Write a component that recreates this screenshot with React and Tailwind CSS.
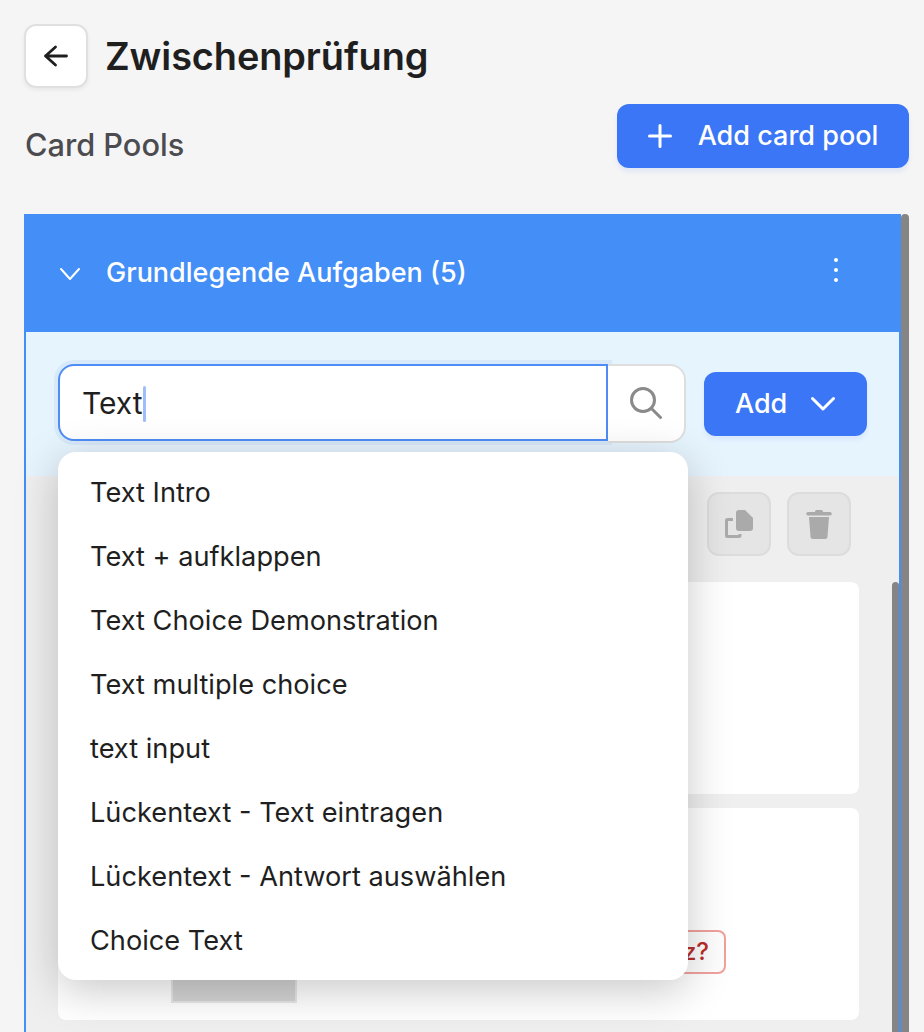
import React from "react";

const items = [
  "Text Intro",
  "Text + aufklappen",
  "Text Choice Demonstration",
  "Text multiple choice",
  "text input",
  "Lückentext - Text eintragen",
  "Lückentext - Antwort auswählen",
  "Choice Text",
];

function Arrow() {
  return (
    <svg width="28" height="28" viewBox="0 0 28 28" fill="none" stroke="#1f1f1f" strokeWidth="2.800" strokeLinecap="round" strokeLinejoin="round">
      <path d="M24.500 14H3.500M13.500 5l-10 9 10 9" />
    </svg>
  );
}

function SearchIcon() {
  return (
    <svg width="32" height="32" viewBox="0 0 32 32" fill="none" stroke="#8a8a8a" strokeWidth="3" strokeLinecap="round" className="-mt-0.5">
      <circle cx="13" cy="13" r="11.500" />
      <path d="M21.500 21.500l9 9" />
    </svg>
  );
}

function CopyIcon() {
  return (
    <svg width="30" height="30" viewBox="0 0 30 30" fill="#aaaaaa">
      <path d="M15 1h6l8 8v10a3 3 0 0 1-3 3H15a3 3 0 0 1-3-3V4a3 3 0 0 1 3-3z" />
      <path d="M9 9H3.500A2.500 2.500 0 0 0 1 11.500V26.500A2.500 2.500 0 0 0 3.500 29H15a2.500 2.500 0 0 0 2.500-2.500V25h-3v1H4V12h5z" />
    </svg>
  );
}

function TrashIcon() {
  return (
    <svg width="26" height="30" viewBox="0 0 26 30" fill="#aaaaaa">
      <path d="M9 2.500C9 1.500 10 1 11 1h4c1 0 2 .5 2 1.500V3h7a1.500 1.500 0 0 1 0 3.500H2A1.500 1.500 0 0 1 2 3h7z" />
      <path d="M3 8h20l-1.500 19.500A2.500 2.500 0 0 1 19 30H7a2.500 2.500 0 0 1-2.500-2.500z" />
    </svg>
  );
}

export default function App() {
  return (
    <div className="h-[1032px] overflow-hidden bg-[#f5f5f5] pl-6 pr-[15px] font-['Inter',sans-serif] text-[#1f1f1f]">
      <div className="flex items-center gap-[18px] pt-6">
        <button className="flex h-[64px] w-[64px] items-center justify-center rounded-xl border-2 border-[#e0e0e0] bg-white shadow-[0_2px_4px_rgba(0,0,0,0.06)]">
          <Arrow />
        </button>
        <h1 className="-ml-px text-[37.900px] leading-[44px] font-semibold tracking-[-0.1px] text-[#1f1f1f]">Zwischenprüfung</h1>
      </div>

      <div className="mt-4 flex items-start justify-between pl-px">
        <h2 className="mt-[21px] text-[30.700px] leading-[40px] font-medium text-[#4b4b50]">Card Pools</h2>
        <button className="flex h-16 w-[292px] items-center justify-center gap-[26px] rounded-xl bg-[#3b76f6] text-[27px] font-medium text-white shadow-[0_4px_4px_rgba(59,118,246,0.1)]">
          <svg width="24" height="24" viewBox="0 0 24 24" fill="none" stroke="white" strokeWidth="3" strokeLinecap="round">
            <path d="M12 1.500v21M1.500 12h21" />
          </svg>
          <span>Add card pool</span>
        </button>
      </div>

      <div className="mt-[46px] flex items-stretch">
        <div className="relative h-[900px] w-[877px] border-x-2 border-[#448ef7] bg-[#efefef]">
          <div className="-mx-[1px] flex h-[118px] items-center bg-[#448ef7] pr-[52px] pl-[34px] text-white">
            <svg width="22" height="14" viewBox="0 0 22 14" fill="none" stroke="white" strokeWidth="2" strokeLinecap="round" strokeLinejoin="round" className="mt-0.5">
              <path d="M2 2l9 10 9-10" />
            </svg>
            <span className="ml-[25px] text-[27px] font-medium">Grundlegende Aufgaben (5)</span>
            <svg width="6" height="26" viewBox="0 0 6 26" fill="white" className="mr-[9px] ml-auto -mt-[6px]">
              <circle cx="3" cy="3" r="2" />
              <circle cx="3" cy="13" r="2" />
              <circle cx="3" cy="23" r="2" />
            </svg>
          </div>

          <div className="relative z-10 flex h-[144px] items-start bg-[#e6f4fe] pt-8 pr-[32px] pl-8">
            <div className="flex h-[79px] w-[628px] items-start">
              <div className="flex h-[77px] w-[550px] items-center rounded-l-2xl border-2 border-[#4d8df5] bg-white pt-0.5 pl-[22px] text-[30px] text-[#1f1f1f] ring-4 ring-[#d8e9fa]">
                <span>Text</span>
                <span className="h-9 w-[3.500px] rounded-sm bg-[#a0bdf9]" />
              </div>
              <button className="flex h-[79px] flex-1 items-center justify-center rounded-r-2xl border-2 border-l-0 border-[#dedede] bg-white">
                <SearchIcon />
              </button>
            </div>
            <button className="mt-2 ml-[18px] flex h-16 w-[163px] items-center gap-6 rounded-xl bg-[#3b76f6] pl-[31px] text-[27px] font-medium text-white shadow-[0_4px_4px_rgba(59,118,246,0.08)]">
              <span>Add</span>
              <svg width="24" height="16" viewBox="0 0 24 16" fill="none" stroke="white" strokeWidth="3" strokeLinecap="round" strokeLinejoin="round">
                <path d="M1.500 2.500L12 13 22.500 2.500" />
              </svg>
            </button>
          </div>

          <div className="relative pt-4 pr-[40px] pl-[32px]">
            <div className="flex justify-end gap-4 pr-[8px]">
              <button className="flex h-16 w-16 items-center justify-center rounded-xl border-2 border-[#dcdcdc] bg-[#e5e5e5]">
                <CopyIcon />
              </button>
              <button className="flex h-16 w-16 items-center justify-center rounded-xl border-2 border-[#dcdcdc] bg-[#e5e5e5]">
                <TrashIcon />
              </button>
            </div>
            <div className="mt-[26px] flex w-[801px] flex-col gap-[14px]">
              <div className="h-[212px] rounded-lg bg-white" />
              <div className="flex h-[212px] items-end rounded-lg bg-white pr-[133px] pb-[17px] pl-[113px]">
                <div className="h-[120px] w-[126px] border-2 border-[#e6e6e6] bg-[#d4d4d4]" />
                <div className="mb-[29px] ml-auto flex h-11 items-center rounded-lg border-2 border-[#f0a19c] bg-[#fdfdfd] px-[15px] text-[24px] font-medium text-[#b92d2a]">Ersatz?</div>
              </div>
            </div>
            <div className="absolute top-[106px] right-0 h-[700px] w-[7px] rounded-t bg-[#858585]" />
          </div>

          <div className="absolute top-[238px] left-[32px] z-20 w-[630px] rounded-[18px] bg-white pt-[9px] pb-[7px] shadow-[0_10px_44px_rgba(0,0,0,0.22)]">
            {items.map((t) => (
              <div key={t} className="flex h-16 items-center pl-[32px] text-[27.200px] text-[#1f1f1f]">{t}</div>
            ))}
          </div>
        </div>
        <div className="h-[900px] w-2 rounded-t bg-[#858585]" />
      </div>
    </div>
  );
}
